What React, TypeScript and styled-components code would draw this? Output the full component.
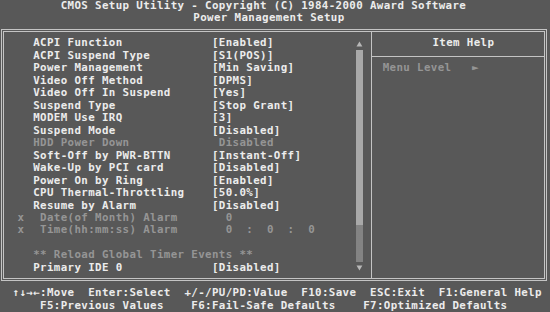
import React from "react";
import styled, { createGlobalStyle } from "styled-components";

const CW = 6.875;
const RH = 12.48;
const X0 = -1.2;
const col = (c: number) => c * CW + X0;

const BG = "#585858";
const FG = "#ececec";
const DIM = "#959595";
const LINE = "#c4c4c4";

const Global = createGlobalStyle`
  html, body { margin: 0; padding: 0; background: ${BG}; }
  body { width: 550px; height: 312px; overflow: hidden; }
`;

const Screen = styled.div`
  width: 550px;
  height: 312px;
  background: ${BG};
  color: ${FG};
  font-family: "DejaVu Sans Mono", "Liberation Mono", monospace;
  font-weight: bold;
  font-size: 10.8px;
  letter-spacing: ${CW - 10.8 * 0.602}px;
  line-height: ${RH}px;
  white-space: pre;
  overflow: hidden;
  display: flex;
  flex-direction: column;
`;

const Header = styled.header`
  display: flex;
  flex-direction: column;
  height: 29px;
`;

const TextLine = styled.div<{ $left: number }>`
  height: ${RH}px;
  padding-left: ${(p) => p.$left}px;
`;

const Frame = styled.main`
  margin-left: 1px;
  width: 546px;
  height: 252px;
  box-sizing: border-box;
  border: 3px double ${LINE};
  display: flex;
`;

const SettingsPanel = styled.section`
  width: 367px;
  flex: none;
  border-right: 1px solid ${LINE};
  padding-top: 5.44px;
  display: flex;
`;

const RowList = styled.div`
  flex: 1;
  display: flex;
  flex-direction: column;
`;

const Row = styled.div<{ $dim?: boolean }>`
  height: ${RH}px;
  display: grid;
  grid-template-columns: 15.675px ${CW * 26}px auto;
  padding-left: 13.5px;
  color: ${(p) => (p.$dim ? DIM : FG)};
`;

const Marker = styled.span``;
const Label = styled.span<{ $wide?: boolean }>`
  grid-column: ${(p) => (p.$wide ? "2 / -1" : "2")};
`;
const Value = styled.span``;

const ScrollBar = styled.div`
  width: ${CW}px;
  margin-right: 8.5px;
  display: flex;
  flex-direction: column;
`;

const ScrollArrow = styled.div`
  height: ${RH}px;
  display: flex;
  align-items: center;
  justify-content: center;
`;

const ScrollThumb = styled.div<{ $rows: number }>`
  height: ${(p) => p.$rows * RH}px;
  background: #a9a9a9;
`;

const ScrollTrack = styled.div<{ $rows: number }>`
  height: ${(p) => p.$rows * RH}px;
  background-color: #6a6a6a;
  background-image: radial-gradient(circle, #a0a0a0 0.6px, transparent 0.8px);
  background-size: 2px 2px;
`;

const HelpPanel = styled.aside`
  flex: 1;
  display: flex;
  flex-direction: column;
`;

const HelpTitle = styled.div`
  padding-top: 5.44px;
  height: ${RH}px;
  padding-bottom: 6px;
  padding-left: 60.4px;
  border-bottom: 1px solid ${LINE};
`;

const HelpLine = styled.div`
  margin-top: 5.48px;
  height: ${RH}px;
  padding-left: 10.7px;
  color: ${DIM};
`;

const Footer = styled.footer`
  padding-top: 6.04px;
  display: flex;
  flex-direction: column;
`;

const FooterLine = styled.div<{ $left: number; $gap: number }>`
  height: ${RH}px;
  padding-left: ${(p) => p.$left}px;
  display: flex;
  gap: ${(p) => p.$gap * CW}px;
`;

const KeyHint = styled.span``;

type Item = {
  label?: string;
  value?: string;
  marker?: string;
  dim?: boolean;
  wide?: boolean;
};

const items: Item[] = [
  { label: "ACPI Function", value: "[Enabled]" },
  { label: "ACPI Suspend Type", value: "[S1(POS)]" },
  { label: "Power Management", value: "[Min Saving]" },
  { label: "Video Off Method", value: "[DPMS]" },
  { label: "Video Off In Suspend", value: "[Yes]" },
  { label: "Suspend Type", value: "[Stop Grant]" },
  { label: "MODEM Use IRQ", value: "[3]" },
  { label: "Suspend Mode", value: "[Disabled]" },
  { label: "HDD Power Down", value: " Disabled", dim: true },
  { label: "Soft-Off by PWR-BTTN", value: "[Instant-Off]" },
  { label: "Wake-Up by PCI card", value: "[Disabled]" },
  { label: "Power On by Ring", value: "[Enabled]" },
  { label: "CPU Thermal-Throttling", value: "[50.0%]" },
  { label: "Resume by Alarm", value: "[Disabled]" },
  { marker: "x", label: " Date(of Month) Alarm", value: "  0", dim: true },
  { marker: "x", label: " Time(hh:mm:ss) Alarm", value: "  0  :  0  :  0", dim: true },
  {},
  { label: "** Reload Global Timer Events **", dim: true, wide: true },
  { label: "Primary IDE 0", value: "[Disabled]" },
];

const Triangle = ({ up }: { up?: boolean }) => (
  <svg width="7" height="6" viewBox="0 0 7 6">
    <polygon points={up ? "3.5,0.5 6.5,5.5 0.5,5.5" : "0.5,0.5 6.5,0.5 3.5,5.5"} fill="#b8b8b8" />
  </svg>
);

export default function App() {
  return (
    <Screen>
      <Global />
      <Header>
        <TextLine $left={col(9)}>CMOS Setup Utility - Copyright (C) 1984-2000 Award Software</TextLine>
        <TextLine $left={col(28) + 2}>Power Management Setup</TextLine>
      </Header>
      <Frame>
        <SettingsPanel>
          <RowList>
            {items.map((it, i) => (
              <Row key={i} $dim={it.dim}>
                <Marker>{it.marker ?? ""}</Marker>
                <Label $wide={it.wide}>{it.label ?? ""}</Label>
                {!it.wide && <Value>{it.value ?? ""}</Value>}
              </Row>
            ))}
          </RowList>
          <ScrollBar>
            <ScrollArrow>
              <Triangle up />
            </ScrollArrow>
            <ScrollThumb $rows={14} />
            <ScrollTrack $rows={3} />
            <ScrollArrow>
              <Triangle />
            </ScrollArrow>
          </ScrollBar>
        </SettingsPanel>
        <HelpPanel>
          <HelpTitle>Item Help</HelpTitle>
          <HelpLine>Menu Level   ►</HelpLine>
        </HelpPanel>
      </Frame>
      <Footer>
        <FooterLine $left={col(2)} $gap={2}>
          <KeyHint>↑↓→←:Move</KeyHint>
          <KeyHint>Enter:Select</KeyHint>
          <KeyHint>+/-/PU/PD:Value</KeyHint>
          <KeyHint>F10:Save</KeyHint>
          <KeyHint>ESC:Exit</KeyHint>
          <KeyHint>F1:General Help</KeyHint>
        </FooterLine>
        <FooterLine $left={col(6)} $gap={4}>
          <KeyHint>F5:Previous Values</KeyHint>
          <KeyHint>F6:Fail-Safe Defaults</KeyHint>
          <KeyHint>F7:Optimized Defaults</KeyHint>
        </FooterLine>
      </Footer>
    </Screen>
  );
}
